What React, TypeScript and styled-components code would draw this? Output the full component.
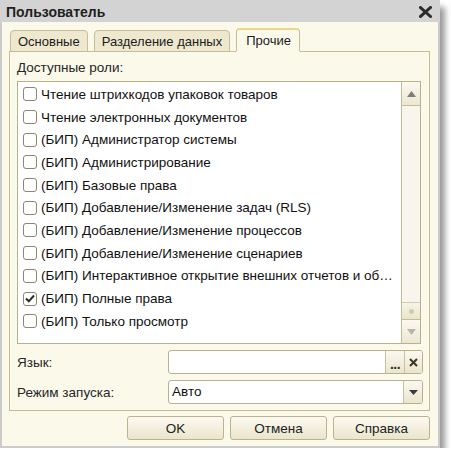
import React from 'react'
import styled, { createGlobalStyle } from 'styled-components'

const roles = [
  { title: 'Чтение штрихкодов упаковок товаров', checked: false },
  { title: 'Чтение электронных документов', checked: false },
  { title: '(БИП) Администратор системы', checked: false },
  { title: '(БИП) Администрирование', checked: false },
  { title: '(БИП) Базовые права', checked: false },
  { title: '(БИП) Добавление/Изменение задач (RLS)', checked: false },
  { title: '(БИП) Добавление/Изменение процессов', checked: false },
  { title: '(БИП) Добавление/Изменение сценариев', checked: false },
  { title: '(БИП) Интерактивное открытие внешних отчетов и обработок', checked: false },
  { title: '(БИП) Полные права', checked: true },
  { title: '(БИП) Только просмотр', checked: false },
]

const tabs = ['Основные', 'Разделение данных', 'Прочие']

const App: React.FC = () => {
  return (
    <>
      <GlobalStyle />
      <Window>
        <TitleBar>
          <Title>Пользователь</Title>
          <svg width="13" height="12" viewBox="0 0 13 12">
            <path d="M1.5 1.5 L11.5 10.5 M11.5 1.5 L1.5 10.5" stroke="#2b2b2b" strokeWidth="3" strokeLinecap="square" />
          </svg>
        </TitleBar>
        <Body>
          <TabStrip>
            {tabs.map((tab, i) => (
              <Tab key={tab} active={i === 2}>{tab}</Tab>
            ))}
          </TabStrip>
          <Panel>
            <Caption>Доступные роли:</Caption>
            <ListBox>
              <Rows>
                {roles.map(role => (
                  <Row key={role.title}>
                    <CheckBox>
                      {role.checked && (
                        <svg width="10" height="9" viewBox="0 0 10 9">
                          <path d="M1 4.5 L3.8 7.3 L9 1.5" fill="none" stroke="#2a2a2a" strokeWidth="2" />
                        </svg>
                      )}
                    </CheckBox>
                    <RowText>{role.title}</RowText>
                  </Row>
                ))}
              </Rows>
              <ScrollBar>
                <ScrollButton>
                  <svg width="9" height="6" viewBox="0 0 9 6"><path d="M4.5 0 L9 6 L0 6 Z" fill="#7d7d7d" /></svg>
                </ScrollButton>
                <Track />
                <Thumb>
                  <ThumbDot />
                </Thumb>
                <ScrollButton>
                  <svg width="9" height="6" viewBox="0 0 9 6"><path d="M0 0 L9 0 L4.5 6 Z" fill="#b4b4b4" /></svg>
                </ScrollButton>
              </ScrollBar>
            </ListBox>
            <Form>
              <FieldLabel>Язык:</FieldLabel>
              <Input>
                <InputValue />
                <InputButton width={19}>
                  <Dots>...</Dots>
                </InputButton>
                <InputButton width={18}>
                  <svg width="9" height="9" viewBox="0 0 9 9">
                    <path d="M1 1 L8 8 M8 1 L1 8" stroke="#3d3420" strokeWidth="2" />
                  </svg>
                </InputButton>
              </Input>
              <FieldLabel>Режим запуска:</FieldLabel>
              <Input>
                <InputValue>Авто</InputValue>
                <InputButton width={19}>
                  <svg width="9" height="5" viewBox="0 0 9 5"><path d="M0 0 L9 0 L4.5 5 Z" fill="#3c3c3c" /></svg>
                </InputButton>
              </Input>
            </Form>
          </Panel>
          <Footer>
            <Button>OK</Button>
            <Button>Отмена</Button>
            <Button>Справка</Button>
          </Footer>
        </Body>
      </Window>
    </>
  )
}

export default App

const GlobalStyle = createGlobalStyle`
  body {
    margin: 0;
    background: #ffffff;
    font-family: "Liberation Sans", Arial, sans-serif;
    font-size: 13px;
  }
  * {
    box-sizing: border-box;
  }
`

const Window = styled.div`
  display: flex;
  flex-direction: column;
  width: 440px;
  height: 448px;
  background: #fbf9ea;
  border: 2px solid #cbcbcb;
  border-top: none;
  box-shadow: 5px 7px 6px rgba(0, 0, 0, 0.4);
`

const TitleBar = styled.div`
  display: flex;
  align-items: center;
  justify-content: space-between;
  height: 22px;
  margin: 0 -2px;
  padding: 2px 8px 0 6px;
  background: #d3d3d3;
`

const Title = styled.span`
  color: #1f1f1f;
  font-size: 14px;
  font-weight: bold;
`

const Body = styled.div`
  display: flex;
  flex-direction: column;
  flex: 1;
  padding: 7px 8px 0 7px;
`

const TabStrip = styled.div`
  display: flex;
  align-items: flex-end;
  gap: 6px;
  height: 23px;
  padding-left: 1px;
  margin-bottom: -1px;
  position: relative;
  z-index: 1;
`

const Tab = styled.div<{ active?: boolean }>`
  display: flex;
  align-items: center;
  height: ${p => (p.active ? '24px' : '22px')};
  padding: ${p => (p.active ? '0 8px 0 9px' : '0 7px')};
  color: #1c1c1c;
  font-size: 13px;
  background: ${p => (p.active ? '#fbf9ea' : '#eee8cf')};
  border: 1px solid #c6bd97;
  border-bottom: ${p => (p.active ? '1px solid #fbf9ea' : '1px solid #c6bd97')};
  border-top: ${p => (p.active ? '2px solid #ecd48a' : '1px solid #c6bd97')};
  border-radius: 4px 4px 0 0;
`

const Panel = styled.div`
  display: flex;
  flex-direction: column;
  height: 360px;
  padding: 8px 8px 0 7px;
  border: 1px solid #c6bd97;
`

const Caption = styled.div`
  height: 16px;
  line-height: 16px;
  color: #262626;
  font-size: 13.5px;
`

const ListBox = styled.div`
  display: flex;
  height: 263px;
  margin-top: 5px;
  background: #ffffff;
  border: 1px solid #b9b18c;
`

const Rows = styled.div`
  flex: 1;
  min-width: 0;
  padding: 1px 0 0 5px;
`

const Row = styled.div`
  display: flex;
  align-items: center;
  gap: 4px;
  height: 22.7px;
`

const CheckBox = styled.div`
  display: flex;
  align-items: center;
  justify-content: center;
  flex: none;
  width: 14px;
  height: 14px;
  background: #ffffff;
  border: 1px solid #8c8673;
  border-radius: 3px;
`

const RowText = styled.span`
  overflow: hidden;
  color: #111111;
  font-size: 13.5px;
  white-space: nowrap;
  text-overflow: ellipsis;
  padding-right: 8px;
`

const ScrollBar = styled.div`
  display: flex;
  flex-direction: column;
  flex: none;
  width: 19px;
  background: #f8f6ec;
  border-left: 1px solid #c4bc98;
`

const ScrollButton = styled.div`
  display: flex;
  align-items: center;
  justify-content: center;
  height: 24px;
  background: linear-gradient(#fbf9f0, #ece7d2);
  border-bottom: 1px solid #c4bc98;
  &:last-child {
    border-top: 1px solid #c4bc98;
    border-bottom: none;
  }
`

const Track = styled.div`
  flex: 1;
`

const Thumb = styled.div`
  display: flex;
  align-items: center;
  justify-content: center;
  height: 17px;
  background: linear-gradient(#f7f4e6, #ebe5cc);
  border-top: 1px solid #d4ccab;
`

const ThumbDot = styled.div`
  width: 5px;
  height: 5px;
  border-radius: 50%;
  background: #cfcab8;
`

const Form = styled.div`
  display: grid;
  grid-template-columns: 151px 1fr;
  grid-auto-rows: 24px;
  row-gap: 6px;
  align-items: center;
  margin: 6px -2px 0 0;
`

const FieldLabel = styled.div`
  color: #262626;
  font-size: 13.5px;
`

const Input = styled.div`
  display: flex;
  height: 24px;
  background: #ffffff;
  border: 1px solid #b9b18c;
  border-radius: 3px;
  overflow: hidden;
`

const InputValue = styled.div`
  flex: 1;
  padding: 0 3px;
  line-height: 22px;
  color: #111111;
  font-size: 13.5px;
`

const InputButton = styled.div<{ width: number }>`
  display: flex;
  align-items: center;
  justify-content: center;
  width: ${p => p.width}px;
  background: linear-gradient(#fbf9f0, #ebe5cd);
  border-left: 1px solid #c9c19e;
`

const Dots = styled.span`
  margin-top: 3px;
  color: #2e2e2e;
  font-weight: bold;
  font-size: 14px;
  letter-spacing: -0.5px;
`

const Footer = styled.div`
  display: flex;
  justify-content: flex-end;
  gap: 6px;
  margin-top: 5px;
`

const Button = styled.div`
  display: flex;
  align-items: center;
  justify-content: center;
  width: 97px;
  height: 24px;
  color: #222222;
  font-size: 13.5px;
  background: linear-gradient(#fcfaf2, #ebe5cb);
  border: 1px solid #bbb38d;
  border-radius: 3px;
`
